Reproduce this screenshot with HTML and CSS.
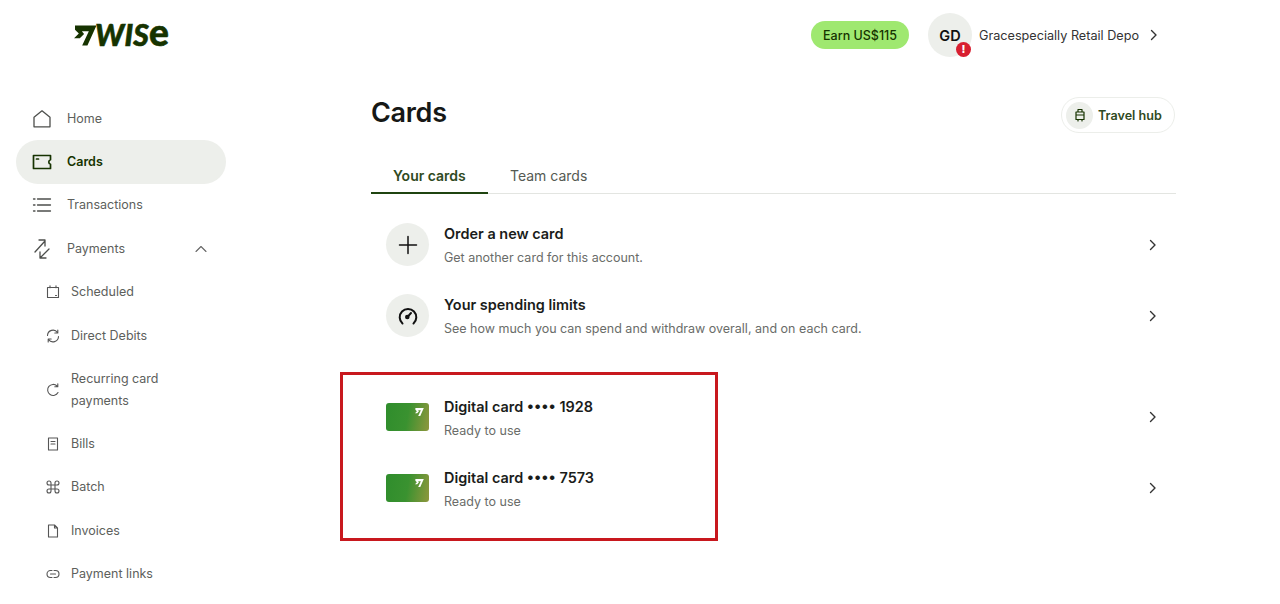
FILE: index.html
```html
<!DOCTYPE html>
<html lang="en">
<head>
<meta charset="utf-8">
<title>Cards - Wise</title>
<link rel="stylesheet" href="styles.css">
</head>
<body>
<header class="topbar">
  <div class="logo">
    <svg class="logo-flag" viewBox="0 0 24 22"><path d="M1 .5h22.500L14 21.500H8.500L15.500 6.500H8.200l2.300 2.800L6 14H0l5-5L1 5z" fill="#163300"/></svg>
    <span class="logo-word">WIS<span class="logo-e">e</span></span>
  </div>
  <div class="account">
    <span class="earn">Earn US$115</span>
    <span class="avatar">GD<span class="alert">!</span></span>
    <span class="account-name">Gracespecially Retail Depo</span>
    <svg class="chev" viewBox="0 0 12 12"><path d="M3.500 1.500 8 6l-4.500 4.500"/></svg>
  </div>
</header>
<div class="layout">
  <nav class="sidebar">
    <a class="nav-item"><svg class="nav-icon" viewBox="0 0 20 20"><path d="M2 17.800V8.200L10 1.800l8 6.400v9.600z"/></svg>Home</a>
    <a class="nav-item active"><svg class="nav-icon" viewBox="0 0 20 20"><path d="M1.500 3.500h17v4.200a2.400 2.400 0 0 0 0 4.600v4.200h-17z"/><path d="M4.500 7h2"/></svg>Cards</a>
    <a class="nav-item"><svg class="nav-icon" viewBox="0 0 20 20"><path d="M5.500 4h13M5.500 10h13M5.500 16h13M1.500 4h1.500M1.500 10h1.500M1.500 16h1.500"/></svg>Transactions</a>
    <a class="nav-item"><svg class="nav-icon" viewBox="0 0 20 20"><path d="M3 13 13 2M7 1h6v6M17 10 8 19M8 13v6h6"/></svg><span class="nav-grow">Payments</span><svg class="nav-caret" viewBox="0 0 12 12"><path d="M1 8.500l5-5 5 5"/></svg></a>
    <a class="nav-item sub"><svg class="sub-icon" viewBox="0 0 14 14"><path d="M1.500 2.500h11v10h-11zM4 .8v2M10 .8v2M9.500 10.500h1"/></svg>Scheduled</a>
    <a class="nav-item sub"><svg class="sub-icon" viewBox="0 0 14 14"><path d="M1.500 6.500A5.500 5.500 0 0 1 11.500 3.500M12.500 7.500A5.500 5.500 0 0 1 2.500 10.500M11.800 1v3h-3M2.200 13v-3h3"/></svg>Direct Debits</a>
    <a class="nav-item sub"><svg class="sub-icon" viewBox="0 0 14 14"><path d="M12 9.500A5.500 5.500 0 1 1 11 3M11.800 .8v3h-3"/></svg><span class="sub-wrap">Recurring card payments</span></a>
    <a class="nav-item sub"><svg class="sub-icon" viewBox="0 0 14 14"><path d="M2.500 1h9v12h-9zM5 4.500h4M5 7h4"/></svg>Bills</a>
    <a class="nav-item sub"><svg class="sub-icon" viewBox="0 0 14 14"><path d="M5 5H3a2 2 0 1 1 2-2zM9 5V3a2 2 0 1 1 2 2zM5 9v2a2 2 0 1 1-2-2zM9 9h2a2 2 0 1 1-2 2zM5 5h4v4H5z"/></svg>Batch</a>
    <a class="nav-item sub"><svg class="sub-icon" viewBox="0 0 14 14"><path d="M2.500 1h6l3 3v9h-9zM8.500 1v3h3"/></svg>Invoices</a>
    <a class="nav-item sub"><svg class="sub-icon" viewBox="0 0 14 14"><path d="M6 3.500H4.500a3.500 3.500 0 0 0 0 7H6M8 3.500h1.500a3.500 3.500 0 0 1 0 7H8M4.500 7h5"/></svg>Payment links</a>
  </nav>
  <main class="content">
    <div class="title-row">
      <h1 class="title">Cards</h1>
      <a class="travel"><span class="travel-icon"><svg viewBox="0 0 14 14"><path d="M3 4h8v7.500H3zM5 4V1.500h4V4M3 7h8M5 11.500V13M9 11.500V13"/></svg></span>Travel hub</a>
    </div>
    <div class="tabs">
      <a class="tab selected">Your cards</a>
      <a class="tab">Team cards</a>
    </div>
    <section class="rows">
      <a class="row">
        <span class="circle"><svg viewBox="0 0 20 20"><path d="M10 1.500v17M1.500 10h17"/></svg></span>
        <span class="row-text"><strong>Order a new card</strong><small>Get another card for this account.</small></span>
        <svg class="chev" viewBox="0 0 12 12"><path d="M3.500 1.500 8 6l-4.500 4.500"/></svg>
      </a>
      <a class="row">
        <span class="circle"><svg class="gauge" viewBox="0 0 20 20"><path d="M4.500 17.500A8.300 8.300 0 1 1 15.500 17.500"/><path d="m9.800 10.700 3.200-3.700"/><circle cx="9.300" cy="11" r="1.300"/></svg></span>
        <span class="row-text"><strong>Your spending limits</strong><small>See how much you can spend and withdraw overall, and on each card.</small></span>
        <svg class="chev" viewBox="0 0 12 12"><path d="M3.500 1.500 8 6l-4.500 4.500"/></svg>
      </a>
    </section>
    <section class="rows cards">
      <div class="highlight"></div>
      <a class="row">
        <span class="card-thumb"><svg viewBox="0 0 24 22"><path d="M1 .5h22.500L14 21.500H8.500L15.500 6.500H8.200l2.300 2.800L6 14H0l5-5L1 5z" fill="#fff"/></svg></span>
        <span class="row-text"><strong>Digital card •••• 1928</strong><small>Ready to use</small></span>
        <svg class="chev" viewBox="0 0 12 12"><path d="M3.500 1.500 8 6l-4.500 4.500"/></svg>
      </a>
      <a class="row">
        <span class="card-thumb"><svg viewBox="0 0 24 22"><path d="M1 .5h22.500L14 21.500H8.500L15.500 6.500H8.200l2.300 2.800L6 14H0l5-5L1 5z" fill="#fff"/></svg></span>
        <span class="row-text"><strong>Digital card •••• 7573</strong><small>Ready to use</small></span>
        <svg class="chev" viewBox="0 0 12 12"><path d="M3.500 1.500 8 6l-4.500 4.500"/></svg>
      </a>
    </section>
  </main>
</div>
</body>
</html>
```
FILE: styles.css
```css
* { box-sizing: border-box; }
html, body { margin: 0; height: 604px; overflow: hidden; }
body { background: #fff; color: #1c1f1c; font-family: Inter, "Liberation Sans", sans-serif; }
svg { display: block; fill: none; stroke: currentColor; stroke-linecap: round; stroke-linejoin: round; }

.topbar { height: 70px; display: flex; justify-content: space-between; align-items: flex-start; padding: 13px 120px 0 74px; }
.logo { display: flex; align-items: center; height: 44px; color: #163300; }
.logo-flag { width: 23px; height: 21px; stroke: none; }
.logo-word { font-family: Lato, sans-serif; font-weight: 900; font-style: italic; font-size: 30px; line-height: 1; letter-spacing: .2px; -webkit-text-stroke: .6px #163300; margin-left: -2px; transform: translateY(-1px); }
.logo-e { font-style: normal; font-size: 37px; line-height: 0; }

.account { display: flex; align-items: center; height: 44px; }
.earn { width: 98px; height: 28px; border-radius: 14px; background: #9fe870; color: #163300; font-size: 12.500px; font-weight: 500; display: flex; align-items: center; justify-content: center; margin-right: 19px; }
.avatar { position: relative; width: 44px; height: 44px; border-radius: 50%; background: #edefeb; color: #111; font-size: 14.500px; font-weight: 600; display: flex; align-items: center; justify-content: center; margin-right: 7px; }
.alert { position: absolute; right: 1px; bottom: 0; width: 15px; height: 15px; border-radius: 50%; background: #d81f30; color: #fff; font-size: 11px; font-weight: 800; line-height: 15px; text-align: center; }
.account-name { font-size: 12.650px; color: #333; width: 169px; white-space: nowrap; }
.chev { width: 12px; height: 12px; stroke-width: 1.400; color: #333; flex: none; }

.layout { display: flex; }
.sidebar { width: 371px; padding: 27px 0 0 16px; flex: none; }
.nav-item { width: 210px; min-height: 43.400px; display: flex; align-items: center; padding: 0 16px; font-size: 12.500px; line-height: 22px; color: #5d605c; border-radius: 22px; }
.nav-item.active { background: #edefeb; color: #163300; font-weight: 600; }
.nav-icon { width: 20px; height: 20px; margin-right: 15px; flex: none; stroke-width: 1.300; color: #4d4f4c; }
.active .nav-icon { color: #163300; stroke-width: 1.700; }
.nav-grow { flex: 1; }
.nav-caret { width: 12px; height: 12px; color: #666; stroke-width: 1.100; margin-right: 3px; }
.nav-item.sub { padding-left: 30px; }
.sub-icon { width: 14px; height: 14px; margin-right: 11px; flex: none; stroke-width: 1.100; color: #555; }
.sub-wrap { width: 110px; padding: 10.500px 0; }

.content { width: 805px; padding-top: 27px; }
.title-row { height: 36px; display: flex; justify-content: space-between; align-items: center; }
.title { margin: 0 0 6px; font-size: 27px; font-weight: 600; color: #161816; letter-spacing: -.3px; }
.travel { width: 114px; height: 36px; border: 1px solid #eceeea; border-radius: 18px; display: flex; align-items: center; padding-left: 4px; font-size: 12.600px; font-weight: 600; color: #2f4a22; margin-right: 1px; }
.travel-icon { width: 27px; height: 27px; border-radius: 50%; background: #edefeb; display: flex; align-items: center; justify-content: center; margin-right: 5px; }
.travel-icon svg { width: 14px; height: 14px; stroke-width: 1.200; color: #163300; }

.tabs { display: flex; margin-top: 25px; height: 36px; border-bottom: 1px solid #e3e5e1; }
.tab { font-size: 14px; line-height: 35px; padding: 0 22px; color: #555a53; height: 36px; }
.tab.selected { color: #2f4a22; font-weight: 600; border-bottom: 2px solid #1f4410; width: 117px; }

.rows { margin-top: 15px; }
.row { height: 71px; display: flex; align-items: center; padding: 0 17px 0 15px; }
.circle { width: 43px; height: 43px; border-radius: 50%; background: #edefeb; display: flex; align-items: center; justify-content: center; margin-right: 15px; flex: none; }
.circle svg { width: 20px; height: 20px; stroke-width: 1.500; color: #111; }
.circle .gauge { stroke-width: 2; }
.row-text { flex: 1; display: flex; flex-direction: column; gap: 8px; padding-top: 3px; }
.row-text strong { font-size: 14.450px; line-height: 16px; font-weight: 600; color: #1a1c1a; }
.row-text small { font-size: 12.500px; line-height: 16px; color: #6a6c69; }

.cards { position: relative; margin-top: 30px; }
.cards .row-text { padding-top: 5px; }
.highlight { position: absolute; left: -31px; top: -9px; width: 378px; height: 169px; border: 3px solid #c8181e; }
.card-thumb { width: 43px; height: 28px; border-radius: 3px; background: linear-gradient(100deg, #2f8d2c 0%, #3a9230 50%, #8f973d 100%); margin-right: 15px; flex: none; display: flex; justify-content: flex-end; padding: 4px 5px 0 0; }
.card-thumb svg { width: 9px; height: 10px; stroke: none; }
```
